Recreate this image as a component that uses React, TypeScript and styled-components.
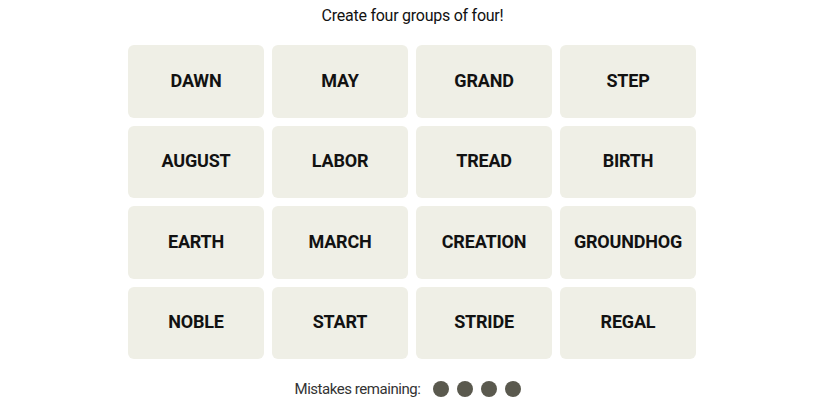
import React from "react"
import styled, { createGlobalStyle } from "styled-components"

const GlobalStyle = createGlobalStyle`
  html, body {
    margin: 0;
    padding: 0;
    background: #fff;
    font-family: 'Roboto', 'Liberation Sans', sans-serif;
  }
`

const Page = styled.div`
  width: 825px;
  height: 413px;
  display: flex;
  flex-direction: column;
  align-items: center;
  padding-top: 6px;
  box-sizing: border-box;
`

const Title = styled.div`
  font-size: 16px;
  line-height: 20px;
  letter-spacing: -0.25px;
  color: #121212;
  margin-bottom: 19px;
`

const Board = styled.div`
  display: grid;
  grid-template-columns: repeat(4, 136px);
  grid-auto-rows: 72.5px;
  gap: 8px;
  margin-right: 1px;
`

const Tile = styled.button`
  border: none;
  border-radius: 6px;
  background: #efefe6;
  color: #121212;
  font-family: 'Roboto', 'Liberation Sans', sans-serif;
  font-weight: 700;
  font-size: 18px;
  letter-spacing: -0.2px;
  text-transform: uppercase;
  display: flex;
  align-items: center;
  justify-content: center;
  padding: 0 0 2px;
  cursor: pointer;
`

const Mistakes = styled.div`
  display: flex;
  align-items: center;
  margin-top: 21px;
  margin-right: 10px;
  font-size: 15px;
  letter-spacing: -0.45px;
  color: #333;
`

const Dots = styled.div`
  display: flex;
  gap: 8px;
  margin-left: 12px;
`

const Dot = styled.span`
  width: 16px;
  height: 16px;
  border-radius: 50%;
  background: #5a594e;
`

const words = [
  "DAWN", "MAY", "GRAND", "STEP",
  "AUGUST", "LABOR", "TREAD", "BIRTH",
  "EARTH", "MARCH", "CREATION", "GROUNDHOG",
  "NOBLE", "START", "STRIDE", "REGAL",
]

const App = () => {
  return (
    <>
      <GlobalStyle />
      <Page>
        <Title>Create four groups of four!</Title>
        <Board>
          {words.map(w => (
            <Tile key={w}>{w}</Tile>
          ))}
        </Board>
        <Mistakes>
          Mistakes remaining:
          <Dots>
            {[0, 1, 2, 3].map(i => <Dot key={i} />)}
          </Dots>
        </Mistakes>
      </Page>
    </>
  )
}

export default App
